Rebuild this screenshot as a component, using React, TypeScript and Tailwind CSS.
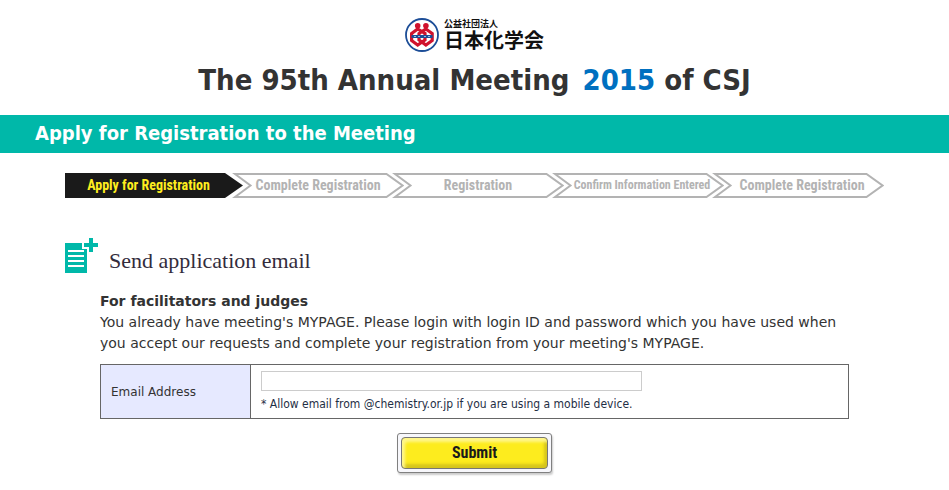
import { useState } from 'react';

const STEPS = [
  { label: 'Complete Registration', text: 'relative block' },
  { label: 'Registration', text: 'relative block' },
  { label: 'Confirm Information Entered', text: 'relative block pl-2 text-xs leading-[25px]' },
  { label: 'Complete Registration', text: 'relative block pl-2' },
];

function Emblem() {
  return (
    <svg width="34" height="34" viewBox="0 0 34 34" aria-hidden="true">
      <circle cx="17" cy="17" r="16" fill="#fff" stroke="#1c4d97" strokeWidth="1.8" />
      <g fill="#d0122d">
        <circle cx="12.700" cy="7.800" r="2.800" />
        <circle cx="20.900" cy="7.800" r="2.800" />
      </g>
      <g fill="none" stroke="#d0122d" strokeWidth="3.200">
        <path d="M12.700 11 L20 15.500 V22 L12.700 27 L6.600 22.500 V15.500 Z" />
        <path d="M20.900 11 L27.200 15.500 V22.500 L20.900 27 L14 22 V15.500 Z" />
      </g>
      <path d="M6.500 18.500h21" stroke="#1c4d97" strokeWidth="3" />
      <path d="M9 18.500h2M13 18.500h2M19 18.500h2M23 18.500h2" stroke="#9db8dc" strokeWidth="1" />
    </svg>
  );
}

function DocumentIcon() {
  return (
    <svg width="34" height="35" viewBox="0 0 34 35" aria-hidden="true" className="shrink-0">
      <path d="M0 5h17v6h5v24H0z" fill="#00b8a9" />
      <path d="M3 13h16M3 18h16M3 23h16M3 28h16" stroke="#fff" strokeWidth="2" />
      <path d="M24 0h4v5h5v4h-5v5h-4V9h-5V5h5z" fill="#00b8a9" />
    </svg>
  );
}

function StepBar() {
  return (
    <ol className="flex font-['Roboto_Condensed','Roboto',sans-serif] text-sm font-bold leading-[25px]">
      <li className="relative w-[179px] shrink-0 text-center text-[#ffee1f]" aria-current="step">
        <svg width="179" height="25" className="absolute inset-0" aria-hidden="true">
          <path d="M0 0h160l18 12.500L160 25H0z" fill="#1a1a1a" />
        </svg>
        <span className="relative block pr-3">Apply for Registration</span>
      </li>
      {STEPS.map((step, i) => (
        <li key={i} className="relative -ml-3 w-[172px] shrink-0 text-center text-[#b3b3b3]">
          <svg width="172" height="25" className="absolute inset-0" aria-hidden="true">
            <path d="M3 1h151.500l16 11.500-16 11.500H3l15.500-11.500z" fill="#fff" stroke="#b3b3b3" strokeWidth="2" />
          </svg>
          <span className={step.text}>{step.label}</span>
        </li>
      ))}
    </ol>
  );
}

export default function App() {
  const [email, setEmail] = useState('');

  return (
    <div className="min-h-screen bg-white pt-[18px] pb-4 font-['DejaVu_Sans',sans-serif] text-[#333333]">
      <header className="flex flex-col items-center">
        <div className="flex items-center gap-[5px] font-['Noto_Sans_CJK_JP',sans-serif] font-bold text-[#111111]">
          <Emblem />
          <div>
            <p className="text-[9px] leading-[10px]">公益社団法人</p>
            <p className="text-xl leading-[22px]">日本化学会</p>
          </div>
        </div>
        <h1 className="mt-2 font-['DejaVu_Sans_Condensed','Noto_Sans',sans-serif] text-[29px] leading-10 font-bold">
          The 95th Annual Meeting <span className="ml-1 text-[#0070c0]">2015</span> of CSJ
        </h1>
      </header>

      <h2 className="mt-[15px] bg-[#00b8a9] px-[35px] pb-0.5 font-['DejaVu_Sans_Condensed','Noto_Sans',sans-serif] text-xl leading-9 font-bold text-white">
        Apply for Registration to the Meeting
      </h2>

      <main>
        <div className="mt-5 px-[65px]">
          <StepBar />
        </div>

        <h3 className="mt-10 flex items-end gap-2.5 px-[65px] font-['Liberation_Serif',serif] text-[22px] leading-6 text-[#332c3c]">
          <DocumentIcon />
          Send application email
        </h3>

        <div className="mt-[18px] px-[100px]">
          <p className="text-sm leading-[21px] font-bold">For facilitators and judges</p>
          <p className="text-sm leading-[21px]">
            You already have meeting's MYPAGE. Please login with login ID and password which you have used when
            you accept our requests and complete your registration from your meeting's MYPAGE.
          </p>

          <form onSubmit={(e) => e.preventDefault()}>
            <table className="mt-2.5 w-full border-collapse border border-[#666666]">
              <tbody>
                <tr>
                  <th scope="row" className="w-[150px] border border-[#666666] bg-[#e6e9ff] px-2.5 text-left text-xs font-normal">
                    <label htmlFor="email">Email Address</label>
                  </th>
                  <td className="px-2.5 pt-1.5 pb-[5px]">
                    <input
                      id="email"
                      type="email"
                      value={email}
                      onChange={(e) => setEmail(e.target.value)}
                      className="block h-5 w-[381px] max-w-full border border-[#cccccc] px-1 text-xs"
                    />
                    <p className="mt-1 font-['DejaVu_Sans_Condensed','DejaVu_Sans',sans-serif] text-xs leading-[18px] text-[#1f2f45]">
                      * Allow email from @chemistry.or.jp if you are using a mobile device.
                    </p>
                  </td>
                </tr>
              </tbody>
            </table>

            <div className="mt-3.5 flex justify-center">
              <button
                type="submit"
                className="h-10 w-[155px] rounded-[3px] border border-[#808080] bg-[#f7f7fb] p-[3px] shadow-[1px_2px_2px_#cccccc]"
              >
                <span className="block rounded-sm border border-[#777777] bg-[#fdec1e] font-['Roboto_Condensed','Roboto',sans-serif] text-base leading-[30px] font-bold text-[#1a1a1a] shadow-[inset_3px_4px_3px_#fff68a,inset_-3px_-4px_3px_#d6c51c]">
                  Submit
                </span>
              </button>
            </div>
          </form>
        </div>
      </main>
    </div>
  );
}
